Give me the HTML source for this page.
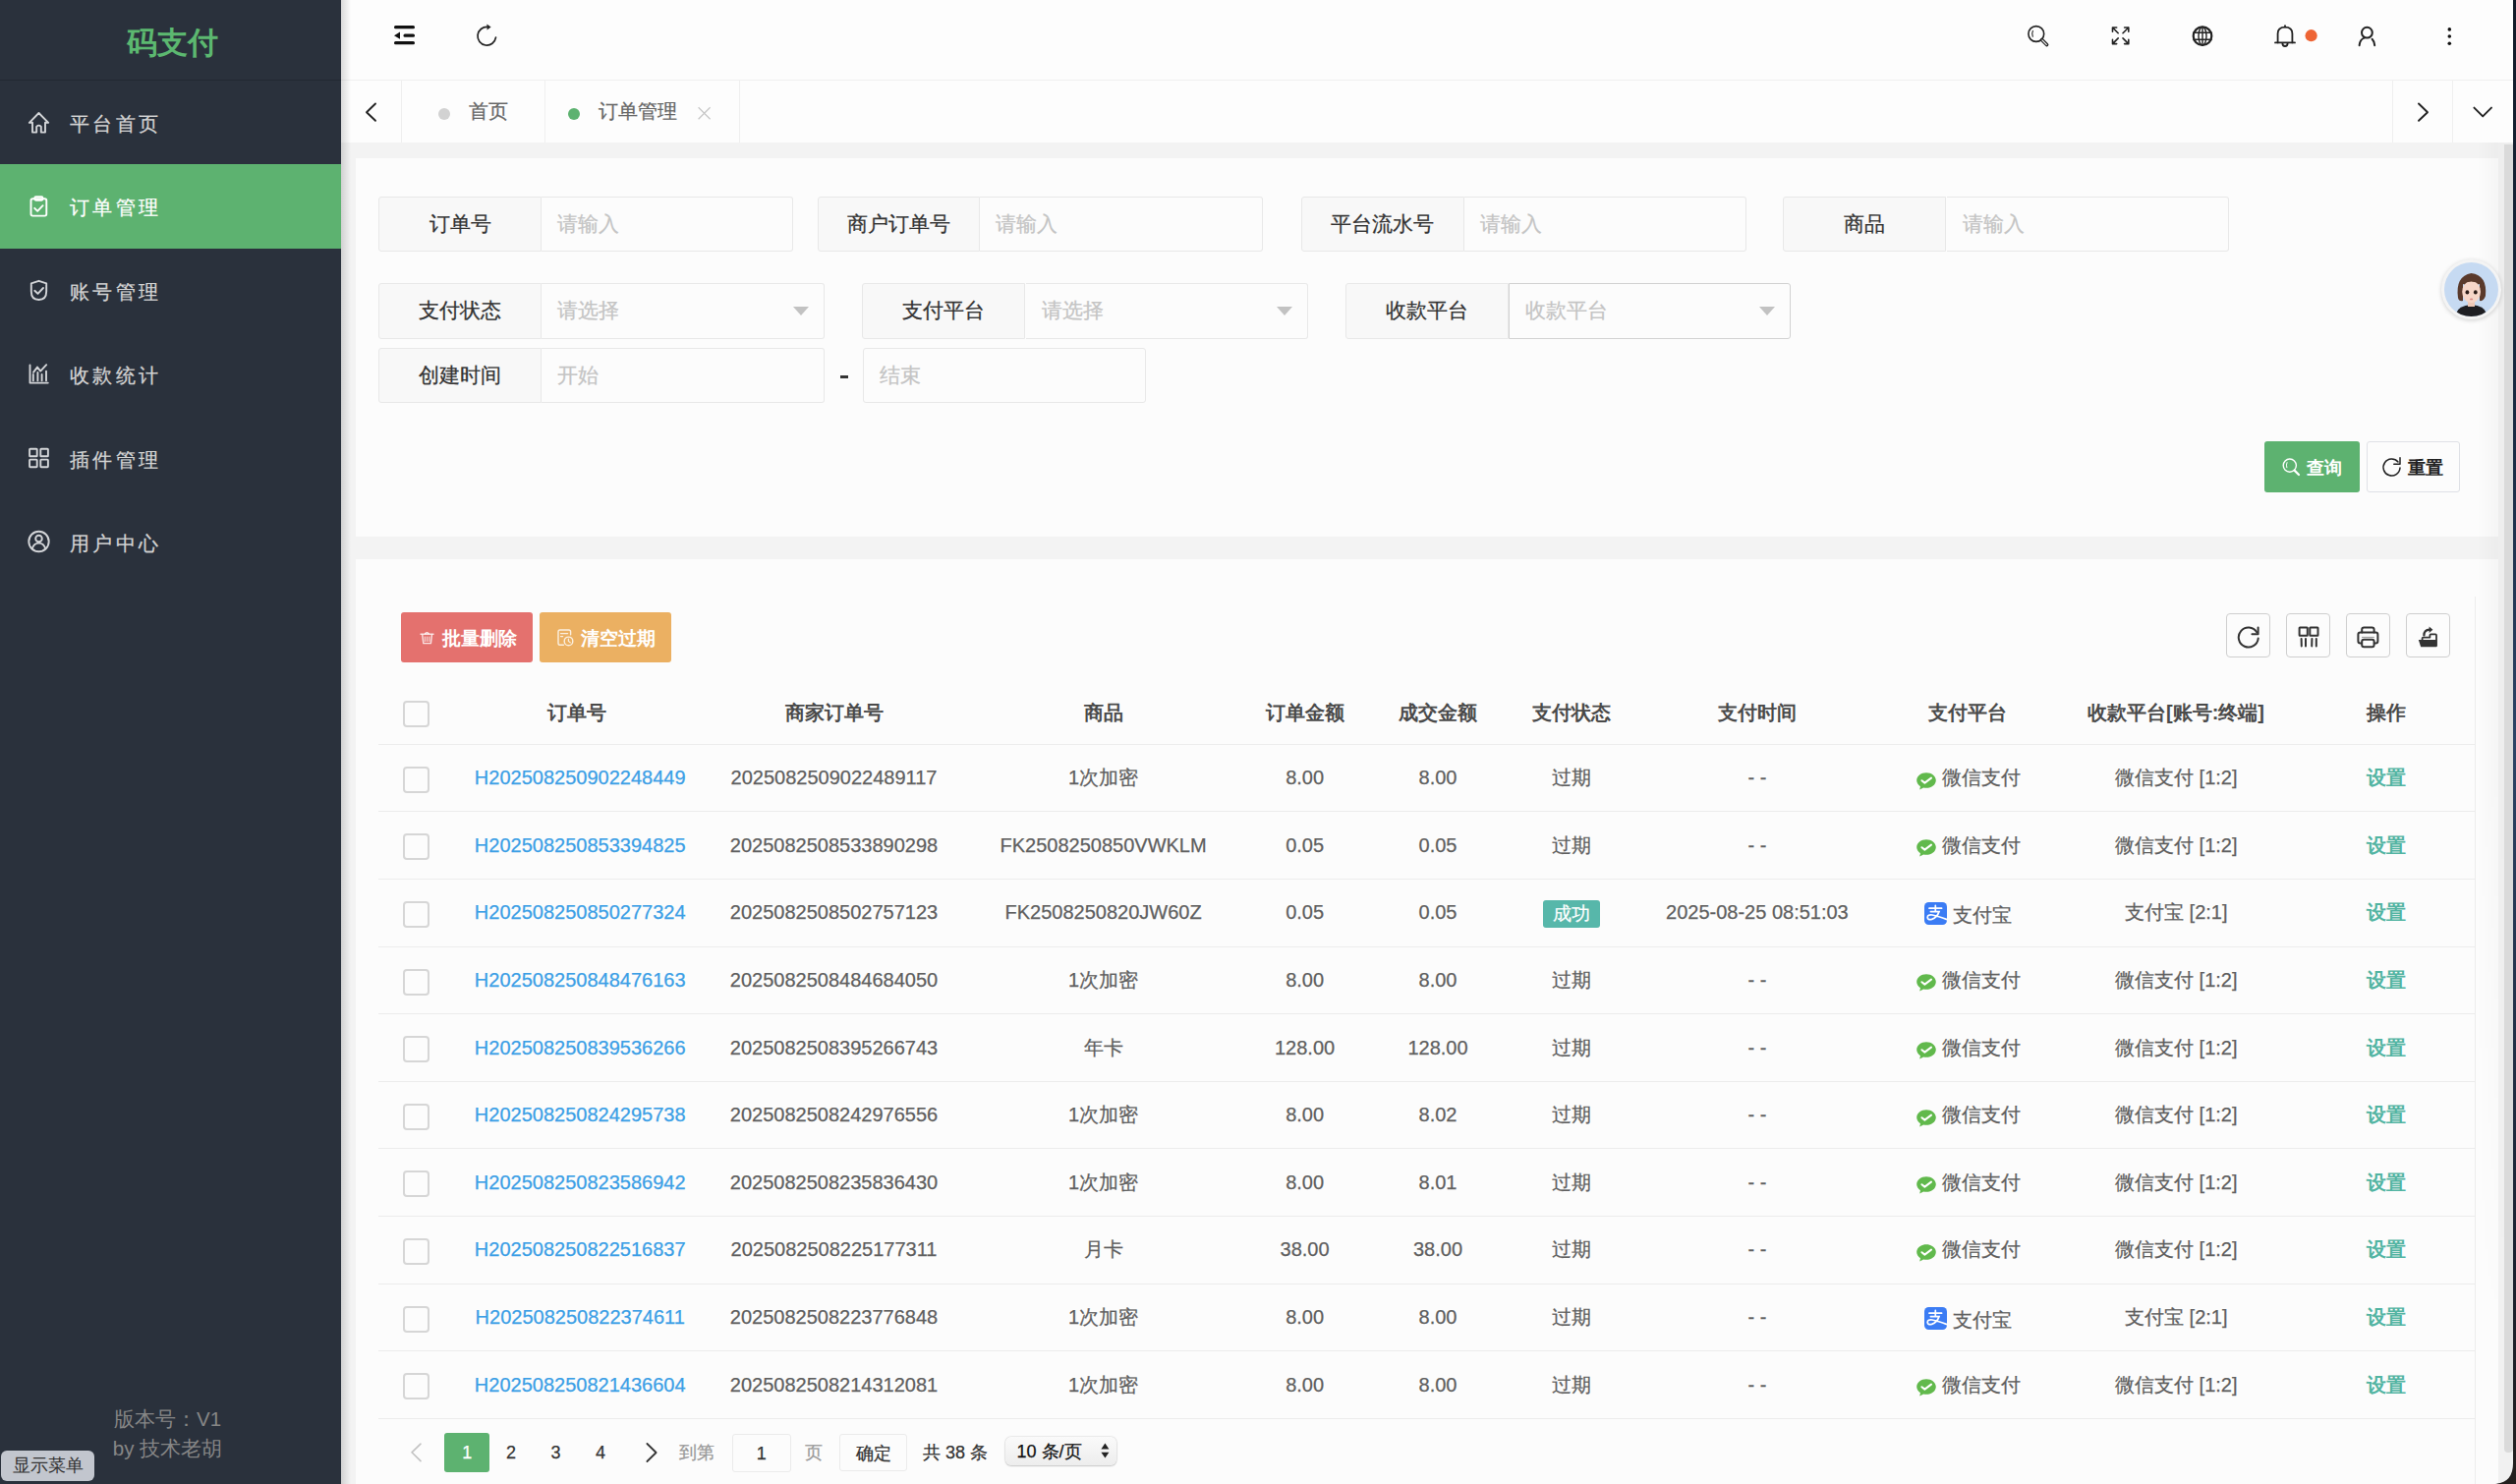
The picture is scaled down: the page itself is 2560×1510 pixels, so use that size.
<!DOCTYPE html>
<html><head><meta charset="utf-8">
<style>
*{box-sizing:border-box;margin:0;padding:0}
html,body{width:2560px;height:1510px;overflow:hidden}
body{position:relative;background:#f3f3f3;font-family:"Liberation Sans",sans-serif;color:#333;-webkit-text-stroke:0.25px currentColor}
.a{position:absolute}
svg{position:absolute;overflow:visible}
/* sidebar */
#side{left:0;top:0;width:347px;height:1510px;background:#2a313c}
#logo{left:2px;top:1px;width:347px;height:81px;color:#5cb870;font-size:31px;font-weight:bold;text-align:center;line-height:86px}
#logoline{left:0;top:81px;width:347px;height:1px;background:#222831}
.mi{left:0;width:347px;height:85.4px;color:#d4d4d4;font-size:20px;letter-spacing:3.4px}
.mi span{position:absolute;left:71px;top:2px;line-height:85.4px}
.mi.on{background:#5db270;color:#fff}
#ver{left:-3px;top:1429px;width:347px;text-align:center;color:#868686;font-size:20.5px;line-height:30px}
#showmenu{left:1px;top:1476px;width:95px;height:31px;background:#c2c6ce;border-radius:6px;color:#333;font-size:18px;line-height:31px;text-align:center}
#shadow{left:347px;top:0;width:10px;height:1510px;background:linear-gradient(to right,rgba(0,0,0,.14),rgba(0,0,0,0))}
/* header */
#hdr{left:347px;top:0;width:2210px;height:82px;background:#fdfdfd;border-bottom:1px solid #f0f0f0}
#tabs{left:347px;top:82px;width:2210px;height:63px;background:#fdfdfd}
.vd{top:82px;width:1px;height:63px;background:#efefef}
.tt{top:82px;line-height:63px;font-size:20px;color:#666}
.dot{width:12px;height:12px;border-radius:6px}
/* cards */
.card{left:362px;width:2180px;background:#fcfcfc}
.lbl{height:56.4px;border:1px solid #e8e8e8;border-radius:3px 0 0 3px;background:#f8f8f8;text-align:center;line-height:54px;font-size:21px;color:#333}
.inp{height:56.4px;border:1px solid #e8e8e8;border-left:none;border-radius:0 3px 3px 0;background:#fcfcfc;font-size:21px;color:#c4c4c4;line-height:54px;padding-left:16px}
.tri{width:0;height:0;border-left:8.5px solid transparent;border-right:8.5px solid transparent;border-top:9px solid #c2c2c2}
.btn{height:52px;border-radius:3px;font-size:18px;font-weight:bold;line-height:52px}
.tb{width:45px;height:45px;border:1.5px solid #cfcfcf;border-radius:4px;background:#fcfcfc}
.th{top:700px;line-height:56px;font-size:20px;font-weight:bold;color:#4a4a4a;text-align:center;white-space:nowrap}
.hl{left:385px;width:2133px;height:1px;background:#ececec}
.cb{left:410px;width:27px;height:27px;border:2px solid #d6d6d6;border-radius:4px;background:#fcfcfc}
.td{font-size:20px;color:#5f5f5f;text-align:center;white-space:nowrap;line-height:68.6px}
.lnk{color:#3b9fe6}
.op{color:#52b4a2;font-weight:bold}
.pg{top:1458px;line-height:40px;font-size:18px;color:#333;text-align:center}
.badge{left:1569.9px;width:57.8px;height:27.5px;background:#57b7aa;border-radius:3px;color:#fff;font-size:19px;line-height:28px;text-align:center}
.btn,.th,.op,#logo,#ver,#showmenu{-webkit-text-stroke:0}
</style></head><body>

<!-- sidebar -->
<div id="side" class="a"></div>
<div id="logo" class="a">码支付</div><div id="logoline" class="a"></div>
<div class="a mi" style="top:82px"><span>平台首页</span></div>
<div class="a mi on" style="top:167.4px"><span>订单管理</span></div>
<div class="a mi" style="top:252.8px"><span>账号管理</span></div>
<div class="a mi" style="top:338.2px"><span>收款统计</span></div>
<div class="a mi" style="top:423.6px"><span>插件管理</span></div>
<div class="a mi" style="top:509px"><span>用户中心</span></div>

<svg class="a" style="left:0;top:0" width="347" height="600">
<g fill="none" stroke="#d3d5d8" stroke-width="1.9" stroke-linejoin="round" stroke-linecap="round">
<!-- home -->
<path d="M39.5 115 L29.8 124.8 L33 124.8 L33 134.6 L37.2 134.6 L37.2 128.8 Q39.5 126.4 41.8 128.8 L41.8 134.6 L46 134.6 L46 124.8 L49.2 124.8 Z"/>
</g>
<g fill="none" stroke="#ffffff" stroke-width="1.9" stroke-linejoin="round" stroke-linecap="round">
<!-- clipboard -->
<rect x="31.5" y="202.2" width="15.8" height="17.4" rx="1.8"/>
<rect x="35.3" y="200.3" width="8.2" height="3.4" rx="1.2"/>
<path d="M35.2 211.8 L38.2 214.8 L43.6 209.2"/>
</g>
<g fill="none" stroke="#d3d5d8" stroke-width="1.9" stroke-linejoin="round" stroke-linecap="round">
<!-- shield -->
<path d="M39.5 285.8 L31.8 288.3 L31.8 296.5 Q31.8 305 39.5 305 Q47.2 305 47.2 296.5 L47.2 288.3 Z"/>
<path d="M35.3 295.8 L38.5 298.8 L44 293"/>
<!-- chart -->
<path d="M30.5 371.5 L30.5 389.6 L48.8 389.6"/>
<path d="M34 378.8 L38 373.6 L41.2 377.6 L47.2 371.2"/>
<path d="M33.8 381 L33.8 387.4 M38.4 379 L38.4 387.4 M42.6 381 L42.6 387.4 M47 377.8 L47 387.4"/>
<!-- grid -->
<rect x="30.1" y="456.7" width="7.6" height="7.6" rx="0.6"/>
<rect x="41.3" y="456.7" width="7.6" height="7.6" rx="0.6"/>
<rect x="30.1" y="467.6" width="7.6" height="7.6" rx="0.6"/>
<rect x="41.3" y="467.6" width="7.6" height="7.6" rx="0.6"/>
<!-- user -->
<circle cx="39.5" cy="551" r="10.2"/>
<circle cx="39.5" cy="548" r="3.3"/>
<path d="M32.6 558.4 Q34.6 552.6 39.5 552.6 Q44.4 552.6 46.4 558.4"/>
</g>
</svg>
<div id="ver" class="a">版本号：V1<br>by 技术老胡</div>
<div id="showmenu" class="a">显示菜单</div>

<!-- header -->
<div id="hdr" class="a"></div>
<div id="tabs" class="a"></div>

<svg class="a" style="left:0;top:0" width="2560" height="150">
<g fill="#111">
<!-- fold menu icon -->
<rect x="401" y="26" width="21" height="3.2" rx="1.5"/>
<rect x="410.5" y="34.6" width="11.5" height="3.2" rx="1.5"/>
<rect x="401" y="42" width="21" height="3.2" rx="1.5"/>
<path d="M401 36.2 L407 32.6 L407 39.8 Z"/>
</g>
<g fill="none" stroke="#222" stroke-width="1.7" stroke-linecap="round">
<!-- refresh -->
<path d="M504.5 38.2 A9.3 9.3 0 1 1 496.2 27.5"/>
</g>
<path d="M495.4 24.6 L499.6 27.6 L495.6 30.6 Z" fill="#222"/>
<g fill="none" stroke="#222" stroke-width="1.8" stroke-linecap="round" stroke-linejoin="round">
<!-- search -->
<circle cx="2071.8" cy="34.5" r="7.9" stroke-width="1.6"/>
<path d="M2068.4 31.4 Q2067 34 2068.3 37.2" stroke-width="1.1"/>
<path d="M2077.6 40.6 L2082.6 45.6" stroke-width="3.6"/>
<path d="M2077.9 40.9 L2082.3 45.3" stroke-width="1.2" stroke="#fdfdfd"/>
<!-- fullscreen -->
<g stroke-width="1.6"><path d="M2149.5 28 L2155.2 33.7 M2149.5 28 L2149.5 32.2 M2149.5 28 L2153.7 28"/>
<path d="M2165.8 28 L2160 33.7 M2165.8 28 L2165.8 32.2 M2165.8 28 L2161.6 28"/>
<path d="M2149.5 44.6 L2155.2 38.9 M2149.5 44.6 L2149.5 40.4 M2149.5 44.6 L2153.7 44.6"/>
<path d="M2165.8 44.6 L2160 38.9 M2165.8 44.6 L2165.8 40.4 M2165.8 44.6 L2161.6 44.6"/></g>
<!-- globe -->
<circle cx="2241" cy="36.7" r="9.3" stroke-width="2.2"/>
<ellipse cx="2241" cy="36.7" rx="4" ry="9.3" stroke-width="1.4"/>
<path d="M2241 27.4 L2241 46 M2232 33.2 L2250 33.2 M2232 40.2 L2250 40.2" stroke-width="1.4"/>
<!-- bell -->
<path d="M2317.6 43.4 L2317.6 34.2 Q2317.6 27.6 2325 27.6 Q2332.4 27.6 2332.4 34.2 L2332.4 43.4"/>
<path d="M2315 43.4 L2335 43.4"/>
<path d="M2325 26.2 L2325 27.4"/>
<path d="M2322.4 44 Q2322.4 47 2325 47 Q2327.6 47 2327.6 44"/>
<!-- user -->
<circle cx="2408.4" cy="33.2" r="5.4" stroke-width="2"/>
<path d="M2400.6 46.2 Q2401.2 40 2405.6 38.6" stroke-width="2"/>
<path d="M2413.6 39.8 Q2415.8 42 2416.2 46.2" stroke-width="2"/>
</g>
<circle cx="2351.6" cy="36.2" r="6.1" fill="#ee6535"/>
<g fill="#111">
<circle cx="2492.3" cy="29.9" r="1.8"/><circle cx="2492.3" cy="37" r="1.8"/><circle cx="2492.3" cy="44.2" r="1.8"/>
</g>
<!-- tab arrows -->
<g fill="none" stroke="#222" stroke-width="1.9" stroke-linecap="round" stroke-linejoin="round">
<path d="M382 105.5 L373 114.2 L382 122.8"/>
<path d="M2461 105.5 L2470 114.2 L2461 122.8"/>
<path d="M2517.4 109.6 L2526.2 118.4 L2535 109.6"/>
</g>
<path d="M710.6 109.2 L722.6 121.2 M722.6 109.2 L710.6 121.2" stroke="#c8c8c8" stroke-width="1.3" fill="none"/>
</svg>
<div class="a vd" style="left:408px"></div>
<div class="a vd" style="left:553.7px"></div>
<div class="a vd" style="left:752.3px"></div>
<div class="a vd" style="left:2434.4px"></div>
<div class="a vd" style="left:2495.3px"></div>
<div class="a dot" style="left:445.7px;top:109.7px;background:#d2d2d2"></div>
<div class="a tt" style="left:477px">首页</div>
<div class="a dot" style="left:578.4px;top:109.7px;background:#5db270"></div>
<div class="a tt" style="left:609px">订单管理</div>
<div id="shadow" class="a"></div>

<!-- card 1 -->
<div class="a card" style="top:161px;height:385.4px"></div>
<div class="a lbl" style="left:385px;top:200px;width:166.20000000000005px;height:56.39999999999998px;line-height:54.39999999999998px">订单号</div><div class="a inp" style="left:551.2px;top:200px;width:256.29999999999995px;height:56.39999999999998px;line-height:54.39999999999998px;border-color:#e8e8e8;">请输入</div><div class="a lbl" style="left:831.6px;top:200px;width:165.69999999999993px;height:56.39999999999998px;line-height:54.39999999999998px">商户订单号</div><div class="a inp" style="left:997.3px;top:200px;width:288.0px;height:56.39999999999998px;line-height:54.39999999999998px;border-color:#e8e8e8;">请输入</div><div class="a lbl" style="left:1323.5px;top:200px;width:166.0px;height:56.39999999999998px;line-height:54.39999999999998px">平台流水号</div><div class="a inp" style="left:1489.5px;top:200px;width:287.20000000000005px;height:56.39999999999998px;line-height:54.39999999999998px;border-color:#e8e8e8;">请输入</div><div class="a lbl" style="left:1814.4px;top:200px;width:166.0999999999999px;height:56.39999999999998px;line-height:54.39999999999998px">商品</div><div class="a inp" style="left:1980.5px;top:200px;width:287.5px;height:56.39999999999998px;line-height:54.39999999999998px;border-color:#e8e8e8;">请输入</div><div class="a lbl" style="left:385px;top:288.3px;width:166.20000000000005px;height:56.30000000000001px;line-height:54.30000000000001px">支付状态</div><div class="a inp" style="left:551.2px;top:288.3px;width:288.29999999999995px;height:56.30000000000001px;line-height:54.30000000000001px;border-color:#e8e8e8;">请选择</div><div class="a tri" style="left:807.0px;top:312px"></div><div class="a lbl" style="left:877.3px;top:288.3px;width:166.20000000000005px;height:56.30000000000001px;line-height:54.30000000000001px">支付平台</div><div class="a inp" style="left:1043.5px;top:288.3px;width:287.5px;height:56.30000000000001px;line-height:54.30000000000001px;border-color:#e8e8e8;">请选择</div><div class="a tri" style="left:1298.5px;top:312px"></div><div class="a lbl" style="left:1369px;top:288.3px;width:165.5px;height:56.30000000000001px;line-height:54.30000000000001px">收款平台</div><div class="a inp" style="left:1534.5px;top:288.3px;width:287.9000000000001px;height:56.30000000000001px;line-height:54.30000000000001px;border-color:#d2d2d2;border-left:1px solid #d2d2d2;">收款平台</div><div class="a tri" style="left:1789.9px;top:312px"></div><div class="a lbl" style="left:385px;top:353.7px;width:166.20000000000005px;height:56.60000000000002px;line-height:54.60000000000002px">创建时间</div><div class="a inp" style="left:551.2px;top:353.7px;width:287.9px;height:56.60000000000002px;line-height:54.60000000000002px;border-color:#e8e8e8;">开始</div><div class="a" style="left:855px;top:382.4px;width:8px;height:2.4px;background:#333"></div><div class="a inp" style="left:877.7px;top:353.7px;width:288.6px;height:56.6px;line-height:54.6px;border-left:1px solid #e8e8e8;border-radius:3px">结束</div>
<div class="a btn" style="left:2304.2px;top:449.1px;width:96.8px;height:51.7px;background:#5db270;color:#fff;padding-left:43px;line-height:54px">查询</div>
<div class="a btn" style="left:2407.5px;top:449.1px;width:95.5px;height:51.7px;background:#fcfcfc;border:1.5px solid #dfe1e6;color:#222;padding-left:41px;line-height:53px">重置</div>
<svg class="a" style="left:0;top:0" width="2560" height="520">
<g fill="none" stroke="#fff" stroke-width="1.4" stroke-linecap="round">
<circle cx="2329.8" cy="473.6" r="6.6"/>
<path d="M2327 470.6 Q2325.8 473 2326.8 475.8" stroke-width="1"/>
<path d="M2334.6 478.6 L2339 483" stroke-width="2.2"/>
</g>
<g fill="none" stroke="#222" stroke-width="1.5" stroke-linecap="round" stroke-linejoin="round">
<path d="M2442 476 A8.5 8.5 0 1 1 2440 470"/>
<path d="M2442 465.8 L2442 472.2 L2435.8 472.2"/>
</g>
</svg>

<!-- card 2 -->
<div class="a card" style="top:569px;height:960px"></div>


<div class="a btn" style="left:408.1px;top:622.5px;width:134.4px;height:51.3px;background:#e4716e;color:#fff;padding-left:42px;line-height:53px;font-size:18.7px">批量删除</div>
<div class="a btn" style="left:548.8px;top:622.5px;width:134.4px;height:51.3px;background:#ebb062;color:#fff;padding-left:42px;line-height:53px;font-size:18.7px">清空过期</div>
<div class="a tb" style="left:2265px;top:624.4px"></div>
<div class="a tb" style="left:2326px;top:624.4px"></div>
<div class="a tb" style="left:2387.2px;top:624.4px"></div>
<div class="a tb" style="left:2448px;top:624.4px"></div>

<svg class="a" style="left:0;top:0" width="2560" height="700">
<g fill="none" stroke="rgba(255,255,255,.8)" stroke-width="1.4" stroke-linecap="round" stroke-linejoin="round">
<path d="M428 645.2 L441 645.2"/>
<path d="M432.6 644.8 Q434.4 642.6 436.2 644.8"/>
<path d="M429.8 646.2 L430.8 654.6 L438.4 654.6 L439.4 646.2"/>
<path d="M432.4 648 L432.4 652.6 M434.6 648 L434.6 652.6 M436.8 648 L436.8 652.6" stroke-width="1"/>
<path d="M573.4 656.2 L569.8 656.2 Q568 656.2 568 654.4 L568 642.8 Q568 641 569.8 641 L578.8 641 Q580.6 641 580.6 642.8 L580.6 645.8"/>
<path d="M570.6 644.6 L577.6 644.6 M570.6 647.6 L572.6 647.6"/>
<circle cx="578.5" cy="652.4" r="4.3"/>
<path d="M578.4 650 L578.4 652.4 L580.2 653.8" stroke-width="1.2"/>
</g>
<g fill="none" stroke="#333" stroke-width="2" stroke-linecap="round" stroke-linejoin="round">
<path d="M2297.7 649.6 A10 10 0 1 1 2296.2 643.2"/>
<path d="M2297.6 638.6 L2297.6 645.2 L2291.4 645.2"/>
<rect x="2339.6" y="638.6" width="8.2" height="8.2" rx="0.5"/>
<rect x="2350.3" y="638.6" width="8.2" height="8.2" rx="0.5"/>
<path d="M2341.6 650 L2341.8 657.4 M2346 650 L2346 657.4 M2352.4 650 L2352.2 657.4 M2356.8 650 L2356.8 657.4"/>
<path d="M2403.2 643.4 L2403.2 640.6 Q2403.2 638.4 2405.4 638.4 L2413.4 638.4 Q2415.6 638.4 2415.6 640.6 L2415.6 643.4"/>
<path d="M2403 654.4 L2401.6 654.4 Q2399.4 654.4 2399.4 652.2 L2399.4 645.6 Q2399.4 643.4 2401.6 643.4 L2417.2 643.4 Q2419.4 643.4 2419.4 645.6 L2419.4 652.2 Q2419.4 654.4 2417.2 654.4 L2415.8 654.4"/>
<rect x="2403.2" y="650.8" width="12.4" height="7.4" rx="2"/>
<path d="M2403.4 648.4 L2415.4 648.4" stroke-width="0.9" stroke="#888"/>
<path d="M2464.6 651 L2464.6 649.6 Q2464.6 648.6 2465.6 648.6 L2472.4 648.6 L2472.4 646.4 Q2472.4 645.4 2473.4 645.4 L2478 645.4 Q2479 645.4 2479 646.4 L2479 657" stroke-width="1.8"/>
<path d="M2466.4 646.4 Q2466.4 641 2472 640.6" stroke-width="2.2"/>
</g>
<path d="M2471.6 637.6 L2475.4 640.8 L2471.6 644 Z" fill="#333"/>
<path d="M2460.8 651 L2479.2 651 L2479.2 658.2 L2463.2 658.2 Z" fill="#333"/>
</svg>
<div class="a" style="left:2518px;top:607px;width:1px;height:903px;background:#ececec"></div>
<div class="a th" style="left:436.6px;top:697.0px;width:300px">订单号</div><div class="a th" style="left:699.3px;top:697.0px;width:300px">商家订单号</div><div class="a th" style="left:973.3px;top:697.0px;width:300px">商品</div><div class="a th" style="left:1177.6px;top:697.0px;width:300px">订单金额</div><div class="a th" style="left:1313.0px;top:697.0px;width:300px">成交金额</div><div class="a th" style="left:1448.8px;top:697.0px;width:300px">支付状态</div><div class="a th" style="left:1637.9px;top:697.0px;width:300px">支付时间</div><div class="a th" style="left:1851.5px;top:697.0px;width:300px">支付平台</div><div class="a th" style="left:2064.0px;top:697.0px;width:300px">收款平台[账号:终端]</div><div class="a th" style="left:2277.5px;top:697.0px;width:300px">操作</div><div class="a cb" style="top:712.5px"></div><div class="a hl" style="top:756.6px"></div><div class="a cb" style="top:779.7px"></div><div class="a td lnk" style="left:390.2px;top:757.2px;width:400px">H202508250902248449</div><div class="a td" style="left:648.5px;top:757.2px;width:400px">2025082509022489117</div><div class="a td" style="left:922.6px;top:757.2px;width:400px">1次加密</div><div class="a td" style="left:1127.6px;top:757.2px;width:400px">8.00</div><div class="a td" style="left:1263.0px;top:757.2px;width:400px">8.00</div><div class="a td" style="left:1398.8px;top:757.2px;width:400px">过期</div><div class="a td" style="left:1587.9px;top:757.2px;width:400px">- -</div><div class="a td" style="left:1975.6px;top:757.2px">微信支付</div><svg class="a" style="left:1949px;top:784.6px" width="22" height="20" viewBox="0 0 22 20"><path d="M11 1.2 C5.6 1.2 1.2 4.6 1.2 9 C1.2 11.6 2.7 13.8 5 15.2 L4.2 18.6 L8.2 16.4 C9.1 16.6 10 16.8 11 16.8 C16.4 16.8 20.8 13.4 20.8 9 C20.8 4.6 16.4 1.2 11 1.2 Z" fill="#61b94c"/><path d="M6.4 9.2 L9.4 11.6 L16 6.6" fill="none" stroke="#fff" stroke-width="2" stroke-linecap="round" stroke-linejoin="round"/></svg><div class="a td" style="left:2014.3px;top:757.2px;width:400px">微信支付 [1:2]</div><div class="a td op" style="left:2227.5px;top:757.2px;width:400px">设置</div><div class="a hl" style="top:825.4px"></div><div class="a cb" style="top:848.3px"></div><div class="a td lnk" style="left:390.2px;top:825.8px;width:400px">H202508250853394825</div><div class="a td" style="left:648.5px;top:825.8px;width:400px">2025082508533890298</div><div class="a td" style="left:922.6px;top:825.8px;width:400px">FK2508250850VWKLM</div><div class="a td" style="left:1127.6px;top:825.8px;width:400px">0.05</div><div class="a td" style="left:1263.0px;top:825.8px;width:400px">0.05</div><div class="a td" style="left:1398.8px;top:825.8px;width:400px">过期</div><div class="a td" style="left:1587.9px;top:825.8px;width:400px">- -</div><div class="a td" style="left:1975.6px;top:825.8px">微信支付</div><svg class="a" style="left:1949px;top:853.2px" width="22" height="20" viewBox="0 0 22 20"><path d="M11 1.2 C5.6 1.2 1.2 4.6 1.2 9 C1.2 11.6 2.7 13.8 5 15.2 L4.2 18.6 L8.2 16.4 C9.1 16.6 10 16.8 11 16.8 C16.4 16.8 20.8 13.4 20.8 9 C20.8 4.6 16.4 1.2 11 1.2 Z" fill="#61b94c"/><path d="M6.4 9.2 L9.4 11.6 L16 6.6" fill="none" stroke="#fff" stroke-width="2" stroke-linecap="round" stroke-linejoin="round"/></svg><div class="a td" style="left:2014.3px;top:825.8px;width:400px">微信支付 [1:2]</div><div class="a td op" style="left:2227.5px;top:825.8px;width:400px">设置</div><div class="a hl" style="top:894.0px"></div><div class="a cb" style="top:916.9px"></div><div class="a td lnk" style="left:390.2px;top:894.4px;width:400px">H202508250850277324</div><div class="a td" style="left:648.5px;top:894.4px;width:400px">2025082508502757123</div><div class="a td" style="left:922.6px;top:894.4px;width:400px">FK2508250820JW60Z</div><div class="a td" style="left:1127.6px;top:894.4px;width:400px">0.05</div><div class="a td" style="left:1263.0px;top:894.4px;width:400px">0.05</div><div class="a badge" style="top:916.2px">成功</div><div class="a td" style="left:1587.9px;top:894.4px;width:400px">2025-08-25 08:51:03</div><div class="a td" style="left:1986.5px;top:896.9px">支付宝</div><svg class="a" style="left:1958px;top:918.4px" width="23" height="23" viewBox="0 0 23 23"><rect x="0" y="0" width="23" height="23" rx="4.5" fill="#3b7cf4"/><path d="M5 6.2 L17.6 6.2 M11.3 3.4 L11.3 9.6 M6.4 9.6 L15 9.6 Q13 15.4 7.6 17.4 Q3.4 18.4 3.2 15.4 Q3.4 12.4 8 13 Q14 14 23 17.6" fill="none" stroke="#fff" stroke-width="1.7" stroke-linecap="round"/></svg><div class="a td" style="left:2014.3px;top:894.4px;width:400px">支付宝 [2:1]</div><div class="a td op" style="left:2227.5px;top:894.4px;width:400px">设置</div><div class="a hl" style="top:962.6px"></div><div class="a cb" style="top:985.5px"></div><div class="a td lnk" style="left:390.2px;top:963.0px;width:400px">H202508250848476163</div><div class="a td" style="left:648.5px;top:963.0px;width:400px">2025082508484684050</div><div class="a td" style="left:922.6px;top:963.0px;width:400px">1次加密</div><div class="a td" style="left:1127.6px;top:963.0px;width:400px">8.00</div><div class="a td" style="left:1263.0px;top:963.0px;width:400px">8.00</div><div class="a td" style="left:1398.8px;top:963.0px;width:400px">过期</div><div class="a td" style="left:1587.9px;top:963.0px;width:400px">- -</div><div class="a td" style="left:1975.6px;top:963.0px">微信支付</div><svg class="a" style="left:1949px;top:990.4px" width="22" height="20" viewBox="0 0 22 20"><path d="M11 1.2 C5.6 1.2 1.2 4.6 1.2 9 C1.2 11.6 2.7 13.8 5 15.2 L4.2 18.6 L8.2 16.4 C9.1 16.6 10 16.8 11 16.8 C16.4 16.8 20.8 13.4 20.8 9 C20.8 4.6 16.4 1.2 11 1.2 Z" fill="#61b94c"/><path d="M6.4 9.2 L9.4 11.6 L16 6.6" fill="none" stroke="#fff" stroke-width="2" stroke-linecap="round" stroke-linejoin="round"/></svg><div class="a td" style="left:2014.3px;top:963.0px;width:400px">微信支付 [1:2]</div><div class="a td op" style="left:2227.5px;top:963.0px;width:400px">设置</div><div class="a hl" style="top:1031.2px"></div><div class="a cb" style="top:1054.1px"></div><div class="a td lnk" style="left:390.2px;top:1031.6px;width:400px">H202508250839536266</div><div class="a td" style="left:648.5px;top:1031.6px;width:400px">2025082508395266743</div><div class="a td" style="left:922.6px;top:1031.6px;width:400px">年卡</div><div class="a td" style="left:1127.6px;top:1031.6px;width:400px">128.00</div><div class="a td" style="left:1263.0px;top:1031.6px;width:400px">128.00</div><div class="a td" style="left:1398.8px;top:1031.6px;width:400px">过期</div><div class="a td" style="left:1587.9px;top:1031.6px;width:400px">- -</div><div class="a td" style="left:1975.6px;top:1031.6px">微信支付</div><svg class="a" style="left:1949px;top:1059.0px" width="22" height="20" viewBox="0 0 22 20"><path d="M11 1.2 C5.6 1.2 1.2 4.6 1.2 9 C1.2 11.6 2.7 13.8 5 15.2 L4.2 18.6 L8.2 16.4 C9.1 16.6 10 16.8 11 16.8 C16.4 16.8 20.8 13.4 20.8 9 C20.8 4.6 16.4 1.2 11 1.2 Z" fill="#61b94c"/><path d="M6.4 9.2 L9.4 11.6 L16 6.6" fill="none" stroke="#fff" stroke-width="2" stroke-linecap="round" stroke-linejoin="round"/></svg><div class="a td" style="left:2014.3px;top:1031.6px;width:400px">微信支付 [1:2]</div><div class="a td op" style="left:2227.5px;top:1031.6px;width:400px">设置</div><div class="a hl" style="top:1099.8px"></div><div class="a cb" style="top:1122.7px"></div><div class="a td lnk" style="left:390.2px;top:1100.2px;width:400px">H202508250824295738</div><div class="a td" style="left:648.5px;top:1100.2px;width:400px">2025082508242976556</div><div class="a td" style="left:922.6px;top:1100.2px;width:400px">1次加密</div><div class="a td" style="left:1127.6px;top:1100.2px;width:400px">8.00</div><div class="a td" style="left:1263.0px;top:1100.2px;width:400px">8.02</div><div class="a td" style="left:1398.8px;top:1100.2px;width:400px">过期</div><div class="a td" style="left:1587.9px;top:1100.2px;width:400px">- -</div><div class="a td" style="left:1975.6px;top:1100.2px">微信支付</div><svg class="a" style="left:1949px;top:1127.6px" width="22" height="20" viewBox="0 0 22 20"><path d="M11 1.2 C5.6 1.2 1.2 4.6 1.2 9 C1.2 11.6 2.7 13.8 5 15.2 L4.2 18.6 L8.2 16.4 C9.1 16.6 10 16.8 11 16.8 C16.4 16.8 20.8 13.4 20.8 9 C20.8 4.6 16.4 1.2 11 1.2 Z" fill="#61b94c"/><path d="M6.4 9.2 L9.4 11.6 L16 6.6" fill="none" stroke="#fff" stroke-width="2" stroke-linecap="round" stroke-linejoin="round"/></svg><div class="a td" style="left:2014.3px;top:1100.2px;width:400px">微信支付 [1:2]</div><div class="a td op" style="left:2227.5px;top:1100.2px;width:400px">设置</div><div class="a hl" style="top:1168.4px"></div><div class="a cb" style="top:1191.3px"></div><div class="a td lnk" style="left:390.2px;top:1168.8px;width:400px">H202508250823586942</div><div class="a td" style="left:648.5px;top:1168.8px;width:400px">2025082508235836430</div><div class="a td" style="left:922.6px;top:1168.8px;width:400px">1次加密</div><div class="a td" style="left:1127.6px;top:1168.8px;width:400px">8.00</div><div class="a td" style="left:1263.0px;top:1168.8px;width:400px">8.01</div><div class="a td" style="left:1398.8px;top:1168.8px;width:400px">过期</div><div class="a td" style="left:1587.9px;top:1168.8px;width:400px">- -</div><div class="a td" style="left:1975.6px;top:1168.8px">微信支付</div><svg class="a" style="left:1949px;top:1196.2px" width="22" height="20" viewBox="0 0 22 20"><path d="M11 1.2 C5.6 1.2 1.2 4.6 1.2 9 C1.2 11.6 2.7 13.8 5 15.2 L4.2 18.6 L8.2 16.4 C9.1 16.6 10 16.8 11 16.8 C16.4 16.8 20.8 13.4 20.8 9 C20.8 4.6 16.4 1.2 11 1.2 Z" fill="#61b94c"/><path d="M6.4 9.2 L9.4 11.6 L16 6.6" fill="none" stroke="#fff" stroke-width="2" stroke-linecap="round" stroke-linejoin="round"/></svg><div class="a td" style="left:2014.3px;top:1168.8px;width:400px">微信支付 [1:2]</div><div class="a td op" style="left:2227.5px;top:1168.8px;width:400px">设置</div><div class="a hl" style="top:1237.0px"></div><div class="a cb" style="top:1259.9px"></div><div class="a td lnk" style="left:390.2px;top:1237.4px;width:400px">H202508250822516837</div><div class="a td" style="left:648.5px;top:1237.4px;width:400px">2025082508225177311</div><div class="a td" style="left:922.6px;top:1237.4px;width:400px">月卡</div><div class="a td" style="left:1127.6px;top:1237.4px;width:400px">38.00</div><div class="a td" style="left:1263.0px;top:1237.4px;width:400px">38.00</div><div class="a td" style="left:1398.8px;top:1237.4px;width:400px">过期</div><div class="a td" style="left:1587.9px;top:1237.4px;width:400px">- -</div><div class="a td" style="left:1975.6px;top:1237.4px">微信支付</div><svg class="a" style="left:1949px;top:1264.8px" width="22" height="20" viewBox="0 0 22 20"><path d="M11 1.2 C5.6 1.2 1.2 4.6 1.2 9 C1.2 11.6 2.7 13.8 5 15.2 L4.2 18.6 L8.2 16.4 C9.1 16.6 10 16.8 11 16.8 C16.4 16.8 20.8 13.4 20.8 9 C20.8 4.6 16.4 1.2 11 1.2 Z" fill="#61b94c"/><path d="M6.4 9.2 L9.4 11.6 L16 6.6" fill="none" stroke="#fff" stroke-width="2" stroke-linecap="round" stroke-linejoin="round"/></svg><div class="a td" style="left:2014.3px;top:1237.4px;width:400px">微信支付 [1:2]</div><div class="a td op" style="left:2227.5px;top:1237.4px;width:400px">设置</div><div class="a hl" style="top:1305.6px"></div><div class="a cb" style="top:1328.5px"></div><div class="a td lnk" style="left:390.2px;top:1306.0px;width:400px">H202508250822374611</div><div class="a td" style="left:648.5px;top:1306.0px;width:400px">2025082508223776848</div><div class="a td" style="left:922.6px;top:1306.0px;width:400px">1次加密</div><div class="a td" style="left:1127.6px;top:1306.0px;width:400px">8.00</div><div class="a td" style="left:1263.0px;top:1306.0px;width:400px">8.00</div><div class="a td" style="left:1398.8px;top:1306.0px;width:400px">过期</div><div class="a td" style="left:1587.9px;top:1306.0px;width:400px">- -</div><div class="a td" style="left:1986.5px;top:1308.5px">支付宝</div><svg class="a" style="left:1958px;top:1330.0px" width="23" height="23" viewBox="0 0 23 23"><rect x="0" y="0" width="23" height="23" rx="4.5" fill="#3b7cf4"/><path d="M5 6.2 L17.6 6.2 M11.3 3.4 L11.3 9.6 M6.4 9.6 L15 9.6 Q13 15.4 7.6 17.4 Q3.4 18.4 3.2 15.4 Q3.4 12.4 8 13 Q14 14 23 17.6" fill="none" stroke="#fff" stroke-width="1.7" stroke-linecap="round"/></svg><div class="a td" style="left:2014.3px;top:1306.0px;width:400px">支付宝 [2:1]</div><div class="a td op" style="left:2227.5px;top:1306.0px;width:400px">设置</div><div class="a hl" style="top:1374.2px"></div><div class="a cb" style="top:1397.1px"></div><div class="a td lnk" style="left:390.2px;top:1374.6px;width:400px">H202508250821436604</div><div class="a td" style="left:648.5px;top:1374.6px;width:400px">2025082508214312081</div><div class="a td" style="left:922.6px;top:1374.6px;width:400px">1次加密</div><div class="a td" style="left:1127.6px;top:1374.6px;width:400px">8.00</div><div class="a td" style="left:1263.0px;top:1374.6px;width:400px">8.00</div><div class="a td" style="left:1398.8px;top:1374.6px;width:400px">过期</div><div class="a td" style="left:1587.9px;top:1374.6px;width:400px">- -</div><div class="a td" style="left:1975.6px;top:1374.6px">微信支付</div><svg class="a" style="left:1949px;top:1402.0px" width="22" height="20" viewBox="0 0 22 20"><path d="M11 1.2 C5.6 1.2 1.2 4.6 1.2 9 C1.2 11.6 2.7 13.8 5 15.2 L4.2 18.6 L8.2 16.4 C9.1 16.6 10 16.8 11 16.8 C16.4 16.8 20.8 13.4 20.8 9 C20.8 4.6 16.4 1.2 11 1.2 Z" fill="#61b94c"/><path d="M6.4 9.2 L9.4 11.6 L16 6.6" fill="none" stroke="#fff" stroke-width="2" stroke-linecap="round" stroke-linejoin="round"/></svg><div class="a td" style="left:2014.3px;top:1374.6px;width:400px">微信支付 [1:2]</div><div class="a td op" style="left:2227.5px;top:1374.6px;width:400px">设置</div><div class="a hl" style="top:1442.8px"></div>
<!-- right edge -->
<div class="a" style="left:2520px;top:145px;width:37px;height:1365px;background:linear-gradient(to right,rgba(0,0,0,0),rgba(0,0,0,.045));-webkit-mask-image:linear-gradient(to bottom,#000 0%,#000 45%,rgba(0,0,0,0) 90%)"></div>
<div class="a" style="left:2542px;top:145px;width:15px;height:1365px;background:rgba(240,240,240,.6)"></div>
<div class="a" style="left:2548.2px;top:147px;width:8.4px;height:1331px;background:#dadada;border-radius:0 0 4px 4px"></div>
<div class="a" style="left:2557px;top:0;width:3px;height:1510px;background:linear-gradient(to bottom,#121b28,#1b2c44 30%,#2d4466 50%,#1c2230 85%,#231f1e)"></div>
<svg class="a" style="left:2536px;top:1489px" width="24" height="21"><path d="M21 0 L24 0 L24 21 L0 21 Q21 21 21 0 Z" fill="#231f1e"/></svg>
<!-- avatar -->
<div class="a" style="left:2483.5px;top:263.5px;width:61px;height:61px;border-radius:50%;background:#f4f4f4;box-shadow:0 1px 4px rgba(0,0,0,.18)"></div>
<svg class="a" style="left:2486.5px;top:266.5px" width="55" height="55" viewBox="0 0 55 55">
<defs><clipPath id="avc"><circle cx="27.5" cy="27.5" r="27.5"/></clipPath></defs>
<g clip-path="url(#avc)">
<rect width="55" height="55" fill="#c6daf2"/>
<path d="M12 52 Q14 44 27.5 43 Q41 44 43 52 L43 56 L12 56 Z" fill="#1e1e22"/>
<rect x="24" y="37" width="7" height="8" fill="#eec9b8"/>
<path d="M14 36 Q11 14 27.5 11 Q44 13 42 34 Q40 40 36 39 L36 22 Q28 25 19 22 L19 39 Q15 40 14 36 Z" fill="#5a3a2c"/>
<ellipse cx="27.6" cy="30" rx="9.4" ry="11" fill="#f6d6c8"/>
<path d="M18 22 Q27 17 37.5 22 Q36 16 27.5 15.5 Q19 16 18 22 Z" fill="#5a3a2c"/>
<ellipse cx="23.4" cy="30.4" rx="1.9" ry="2.1" fill="#2a1c18"/>
<ellipse cx="31.8" cy="30.4" rx="1.9" ry="2.1" fill="#2a1c18"/>
<ellipse cx="27.6" cy="37.4" rx="1.6" ry="0.9" fill="#d98a86"/>
</g>
</svg>

<svg class="a" style="left:0;top:1440px" width="1200" height="70">
<path d="M428 29.2 L419 37.8 L428 46.6" fill="none" stroke="#c2c2c2" stroke-width="1.6" stroke-linecap="round" stroke-linejoin="round"/>
<path d="M658.4 29 L667.6 38 L658.4 47" fill="none" stroke="#333" stroke-width="1.8" stroke-linecap="round" stroke-linejoin="round"/>

</svg>
<div class="a" style="left:452.3px;top:1458.3px;width:46px;height:39.3px;background:#5db270;border-radius:3px;color:#fff;font-size:18px;line-height:40px;text-align:center">1</div>
<div class="a pg" style="left:500px;width:40px">2</div>
<div class="a pg" style="left:545.6px;width:40px">3</div>
<div class="a pg" style="left:591px;width:40px">4</div>
<div class="a pg" style="left:691px;color:#999">到第</div>
<div class="a" style="left:745px;top:1458.6px;width:59.6px;height:39.3px;border:1px solid #ebebeb;border-radius:3px;font-size:18px;line-height:39px;text-align:center;color:#333">1</div>
<div class="a pg" style="left:819px;color:#999">页</div>
<div class="a" style="left:854.2px;top:1458.6px;width:68.8px;height:38.8px;border:1px solid #ebebeb;border-radius:3px;font-size:18px;line-height:39px;text-align:center;color:#333">确定</div>
<div class="a pg" style="left:939px;word-spacing:0">共 38 条</div>
<div class="a" style="left:1022.6px;top:1462.3px;width:113.6px;height:28.3px;border-radius:6px;background:linear-gradient(#fafafa,#ededed);box-shadow:0 0 1.5px rgba(0,0,0,.35),0 1px 1.5px rgba(0,0,0,.15);font-size:18px;line-height:30px;color:#111;padding-left:12px">10 条/页</div>
<svg class="a" style="left:1110px;top:1460px" width="30" height="40"><path d="M10.4 14.4 L14.4 8.6 L18.4 14.4 Z M10.4 17.8 L14.4 23.6 L18.4 17.8 Z" fill="#222"/></svg>

</body></html>
